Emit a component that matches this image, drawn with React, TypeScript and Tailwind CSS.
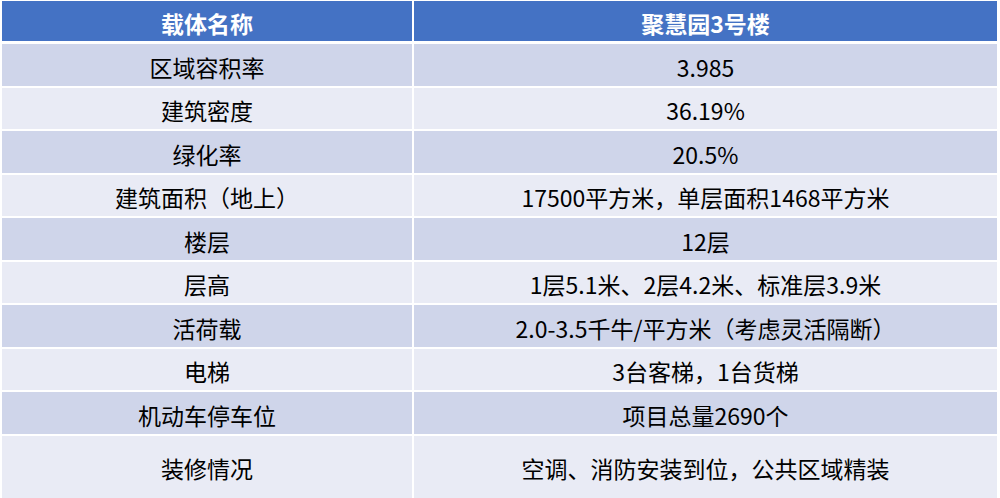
const ROWS: [string, string][] = [
  ['区域容积率', '3.985'],
  ['建筑密度', '36.19%'],
  ['绿化率', '20.5%'],
  ['建筑面积（地上）', '17500平方米，单层面积1468平方米'],
  ['楼层', '12层'],
  ['层高', '1层5.1米、2层4.2米、标准层3.9米'],
  ['活荷载', '2.0-3.5千牛/平方米（考虑灵活隔断）'],
  ['电梯', '3台客梯，1台货梯'],
  ['机动车停车位', '项目总量2690个'],
  ['装修情况', '空调、消防安装到位，公共区域精装'],
];

export default function App() {
  return (
    <div className="w-[1000px] h-[498px] bg-white overflow-hidden pl-[2px] pt-[1px] font-['Noto_Sans_CJK_SC','Noto_Sans',sans-serif] text-[23px] text-black">
      {/* header */}
      <div className="grid grid-cols-[410px_583px] gap-x-[2px] h-[40px] mb-[3px]">
        <div className="bg-[#4472c4] text-white font-bold flex items-center justify-center pt-[4px]">载体名称</div>
        <div className="bg-[#4472c4] text-white font-bold flex items-center justify-center pt-[4px]">聚慧园3号楼</div>
      </div>

      {/* body rows */}
      <div className="flex flex-col gap-y-[2px]">
        {ROWS.map(([label, value], i) => {
          const bg = i % 2 === 0 ? 'bg-[#cfd5ea]' : 'bg-[#e9ebf5]';
          const last = i === ROWS.length - 1;
          return (
            <div
              key={label}
              className={`grid grid-cols-[410px_583px] gap-x-[2px] ${last ? 'h-[62px]' : 'h-[41.5px]'}`}
            >
              <div className={`${bg} flex items-center justify-center pt-[4px]`}>{label}</div>
              <div className={`${bg} flex items-center justify-center pt-[4px]`}>{value}</div>
            </div>
          );
        })}
      </div>
    </div>
  );
}
